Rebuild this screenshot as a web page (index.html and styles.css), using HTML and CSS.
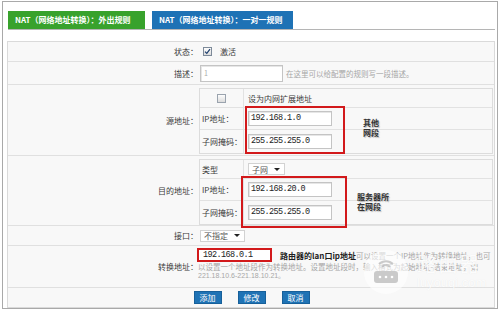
FILE: index.html
```html
<!DOCTYPE html>
<html lang="zh-CN">
<head>
    <meta charset="UTF-8">
    <title>NAT 一对一规则</title>
    <link rel="stylesheet" href="styles.css">
</head>
<body>
    <div class="frame">
        <div class="tabs">
            <span class="tab tab-green">NAT（网络地址转换）：外出规则</span>
            <span class="tab tab-blue">NAT（网络地址转换）：一对一规则</span>
        </div>

        <div class="form">
            <div class="row row-status">
                <div class="label">状态：</div>
                <div class="value">
                    <span class="check checked">
                        <svg width="7" height="7" viewBox="0 0 7 7"><path d="M1 3.6 L2.8 5.4 L6 1.2" fill="none" stroke="#1d3f6e" stroke-width="1.2"/></svg>
                    </span>
                    <span class="check-text">激活</span>
                </div>
            </div>

            <div class="row row-desc">
                <div class="label">描述：</div>
                <div class="value">
                    <span class="input input-desc">1</span>
                    <span class="hint">在这里可以给配置的规则写一段描述。</span>
                </div>
            </div>

            <div class="row row-src">
                <div class="label">源地址：</div>
                <div class="value">
                    <div class="sub">
                        <div class="sub-row sub-row-top">
                            <div class="sub-label center"><span class="check"></span></div>
                            <div class="sub-value text-pad">设为内网扩展地址</div>
                        </div>
                        <div class="sub-row">
                            <div class="sub-label">IP地址：</div>
                            <div class="sub-value"><span class="input input-ip">192.168.1.0</span></div>
                        </div>
                        <div class="sub-row sub-row-last">
                            <div class="sub-label">子网掩码：</div>
                            <div class="sub-value"><span class="input input-ip">255.255.255.0</span></div>
                        </div>
                        <div class="mark mark-src"></div>
                        <div class="note note-src">其他<br>网段</div>
                    </div>
                </div>
            </div>

            <div class="row row-dst">
                <div class="label">目的地址：</div>
                <div class="value">
                    <div class="sub">
                        <div class="sub-row sub-row-top">
                            <div class="sub-label">类型</div>
                            <div class="sub-value"><span class="select select-type">子网</span></div>
                        </div>
                        <div class="sub-row">
                            <div class="sub-label">IP地址：</div>
                            <div class="sub-value"><span class="input input-ip">192.168.20.0</span></div>
                        </div>
                        <div class="sub-row sub-row-last">
                            <div class="sub-label">子网掩码：</div>
                            <div class="sub-value"><span class="input input-ip">255.255.255.0</span></div>
                        </div>
                        <div class="mark mark-dst"></div>
                        <div class="note note-dst">服务器所<br>在网段</div>
                    </div>
                </div>
            </div>

            <div class="row row-port">
                <div class="label">接口：</div>
                <div class="value"><span class="select select-port">不指定</span></div>
            </div>

            <div class="row row-trans">
                <div class="label">转换地址：</div>
                <div class="value">
                    <div class="trans-line">
                        <span class="input input-trans">192.168.0.1</span>
                        <span class="trans-note">路由器的lan口ip地址</span>
                        <span class="hint">可以设置一个IP地址作为转换地址，也可</span>
                    </div>
                    <div class="hint hint-line">以设置一个地址段作为转换地址。设置地址段时，输入格式为起始地址-结束地址，如</div>
                    <div class="hint hint-line hint-num">221.18.10.6-221.18.10.21。</div>
                </div>
            </div>

            <div class="row row-buttons">
                <span class="btn">添加</span>
                <span class="btn">修改</span>
                <span class="btn">取消</span>
            </div>
        </div>

        <div class="watermark">
            <svg class="wm-logo" width="46" height="46" viewBox="0 0 46 46">
                <circle cx="23" cy="23" r="22" fill="rgba(255,255,255,0.6)"/>
                <path d="M16 15 A10 10 0 0 1 30 15" fill="none" stroke="rgba(170,170,170,0.6)" stroke-width="2"/>
                <path d="M19 18 A5 5 0 0 1 27 18" fill="none" stroke="rgba(170,170,170,0.6)" stroke-width="2"/>
                <rect x="11" y="22" width="24" height="12" rx="3" fill="rgba(160,160,160,0.55)"/>
                <circle cx="17" cy="28" r="1.3" fill="#fff"/>
                <circle cx="23" cy="28" r="1.3" fill="#fff"/>
                <circle cx="29" cy="28" r="1.3" fill="#fff"/>
            </svg>
            <div class="wm-text">
                <div class="wm-name">路由器</div>
                <div class="wm-url">luyouqi.com</div>
            </div>
        </div>
    </div>
</body>
</html>
```

FILE: styles.css
```css
* {
    margin: 0;
    padding: 0;
    box-sizing: border-box;
}

body {
    background: #fff;
    font-family: "Noto Sans CJK SC", sans-serif;
    font-size: 8px;
    color: #3a3a3a;
}

.frame {
    position: relative;
    width: 496px;
    height: 308px;
    margin: 1px 0 0 2px;
    border: 1px solid #a9a9a9;
    background: #fff;
    overflow: hidden;
}

/* tabs */
.tabs {
    display: flex;
    gap: 7px;
    height: 19px;
    margin: 9px 2px 0 5px;
    border-bottom: 1px solid #b5b5b5;
}

.tab {
    height: 18px;
    line-height: 18px;
    padding-left: 7px;
    color: #fff;
    font-weight: bold;
    white-space: nowrap;
    overflow: hidden;
}

.tab-green {
    width: 137px;
    background: #38a22c;
}

.tab-blue {
    width: 141px;
    background: #1e72b5;
}

/* form */
.form {
    margin: 11px 2px 0 4px;
    border: 1px solid #dadada;
    background: #f8f8f8;
}

.row {
    display: grid;
    grid-template-columns: 191px 1fr;
    border-bottom: 1px solid #e0e0e0;
}

.label {
    display: flex;
    align-items: center;
    justify-content: flex-end;
    padding-right: 1px;
    color: #3a3a3a;
}

.value {
    display: flex;
    align-items: center;
}

.row-status { height: 20px; }
.row-desc { height: 23px; }
.row-src { height: 71px; }
.row-dst { height: 70px; }
.row-port { height: 20px; }
.row-trans { height: 42px; }

.row-status .value {
    padding-left: 4px;
}

.check {
    display: inline-flex;
    align-items: center;
    justify-content: center;
    width: 9px;
    height: 9px;
    border: 1px solid #9aa3ae;
    background: linear-gradient(#fdfdfd, #dcdcdc);
}

.check.checked {
    border-color: #7d8a99;
}

.check-text {
    margin-left: 8px;
}

.input {
    display: inline-block;
    background: #fff;
    border: 1px solid #c4c4c4;
    box-shadow: inset 1px 1px 0 #e6e6e6;
}

.input-desc {
    width: 83px;
    height: 17px;
    margin-left: 1px;
    padding-left: 3px;
    line-height: 15px;
    color: #aaa;
    font-size: 7px;
}

.hint {
    color: #a6a6a6;
    font-size: 7.5px;
    white-space: nowrap;
}

.row-desc .hint {
    margin-left: 3px;
}

/* nested address tables */
.row-src .value,
.row-dst .value {
    align-items: flex-start;
    padding: 3px 1px 0 0;
}

.sub {
    position: relative;
    flex: 1;
    border: 1px solid #dcdcdc;
}

.sub-row {
    display: grid;
    grid-template-columns: 44px 1fr;
    height: 22px;
    border-bottom: 1px solid #e2e2e2;
}

.sub-row-top { height: 19px; }
.sub-row-last { height: 23px; border-bottom: none; }

.sub-label {
    display: flex;
    align-items: center;
    padding-left: 2px;
    border-right: 1px solid #e2e2e2;
    white-space: nowrap;
}

.sub-label.center {
    justify-content: center;
    padding-left: 0;
}

.sub-value {
    display: flex;
    align-items: center;
    padding-left: 4px;
}

.text-pad {
    padding-left: 4px;
}

.input-ip,
.input-trans {
    height: 15px;
    padding-left: 2px;
    font-family: "Liberation Mono", monospace;
    font-size: 8.5px;
    letter-spacing: -0.6px;
    line-height: 13px;
    color: #222;
}

.input-ip {
    width: 84px;
}

.select {
    display: inline-flex;
    align-items: center;
    height: 12px;
    padding: 0 4px 0 3px;
    background: #fff;
    border: 1px solid #d2d2d2;
    color: #555;
}

.select::after {
    content: "";
    margin-left: 6px;
    border-left: 3px solid transparent;
    border-right: 3px solid transparent;
    border-top: 3px solid #222;
}

.select-port {
    margin-left: 1px;
}

/* red annotation boxes */
.mark {
    position: absolute;
    border: 2px solid #d2191b;
}

.mark-src {
    left: 45px;
    top: 17px;
    width: 100px;
    height: 48px;
}

.mark-dst {
    left: 41px;
    top: 16px;
    width: 106px;
    height: 52px;
}

.note {
    position: absolute;
    font-weight: bold;
    line-height: 10px;
    color: #333;
    text-shadow: 1px 1px 1px rgba(0, 0, 0, 0.25);
}

.note-src {
    left: 163px;
    top: 29px;
}

.note-dst {
    left: 157px;
    top: 32px;
}

/* translated address */
.row-trans .value {
    display: block;
    padding-top: 2px;
}

.trans-line {
    display: flex;
    align-items: center;
    white-space: nowrap;
}

.input-trans {
    width: 75px;
    height: 14px;
    line-height: 11px;
    padding-left: 4px;
    border: 2px solid #d2191b;
    box-shadow: none;
    margin-left: -2px;
}

.trans-note {
    margin-left: 8px;
    font-weight: bold;
    color: #1e1e1e;
}

.hint-line {
    margin-left: -1px;
    line-height: 9px;
}

.hint-num {
    font-family: "Liberation Sans", sans-serif;
    font-size: 7px;
}

.row-buttons {
    display: flex;
    justify-content: center;
    gap: 16px;
    height: 19px;
    align-items: center;
    padding-left: 1px;
    border-bottom: none;
}

.btn {
    width: 28px;
    height: 13px;
    line-height: 11px;
    text-align: center;
    color: #fff;
    background: #1f73b5;
    border: 1px solid #17609a;
}

/* site watermark */
.watermark {
    position: absolute;
    left: 360px;
    top: 247px;
    display: flex;
    align-items: center;
    gap: 8px;
}

.wm-text {
    color: rgba(255, 255, 255, 0.88);
    text-shadow: 0 0 1px rgba(0, 0, 0, 0.08);
}

.wm-name {
    font-size: 20px;
    line-height: 22px;
    letter-spacing: 1px;
}

.wm-url {
    font-family: "Liberation Sans", sans-serif;
    font-size: 13px;
    line-height: 16px;
}
```
